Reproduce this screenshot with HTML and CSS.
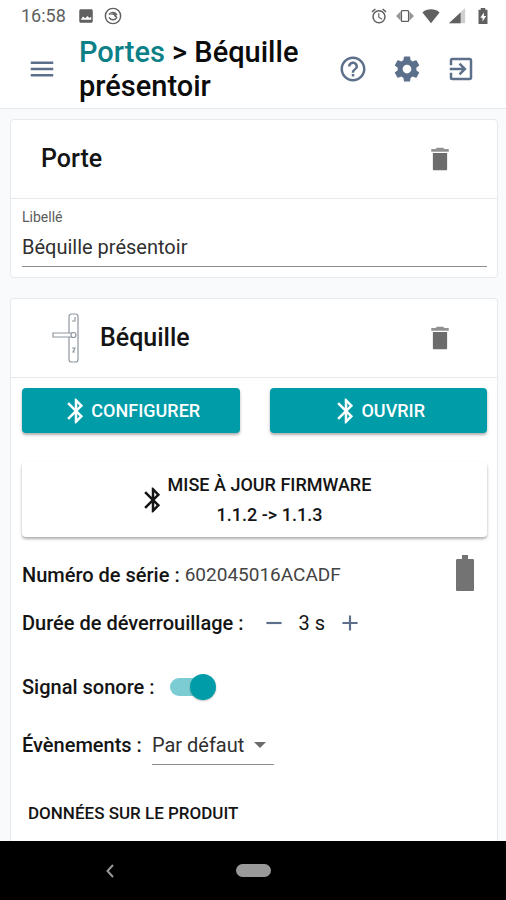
FILE: index.html
```html
<!DOCTYPE html>
<html lang="fr">
<head>
<meta charset="utf-8">
<meta name="viewport" content="width=device-width, initial-scale=1">
<title>Béquille présentoir</title>
<link rel="stylesheet" href="styles.css">
</head>
<body>
<svg class="defs" aria-hidden="true">
  <symbol id="bluetooth" viewBox="0 0 24 24"><path d="M17.71 7.71 12 2h-1v7.59L6.41 5 5 6.41 10.59 12 5 17.59 6.41 19 11 14.41V22h1l5.71-5.71L13.41 12l4.3-4.29zM13 5.83l1.88 1.88L13 9.59V5.83zm1.88 10.46L13 18.17v-3.76l1.88 1.88z"/></symbol>
  <symbol id="trash" viewBox="0 0 24 24"><path d="M6.300 7.200h11.400V20c0 .6-.4 1-1 1H7.300c-.6 0-1-.4-1-1z"/><path opacity=".75" d="M19 4h-3.500l-1-1h-5l-1 1H5v2.200h14V4z"/></symbol>
</svg>

<div class="status">
  <time class="clock">16:58</time>
  <svg class="status-icon" viewBox="0 0 24 24"><path d="M21 19V5c0-1.100-.9-2-2-2H5c-1.100 0-2 .9-2 2v14c0 1.100.9 2 2 2h14c1.100 0 2-.9 2-2zM5 17l3-4.500 3 2.500 3-3 2.500 2.500L19 13v4z"/></svg>
  <svg class="status-icon" viewBox="0 0 20 20"><circle cx="10" cy="10" r="8.500" fill="none" stroke="currentColor" stroke-width="1.600"/><path d="M5.500 8.500C7.500 5 12.500 5 14.500 9M14.500 11.500c-2 3.500-7 3.500-9 0" fill="none" stroke="currentColor" stroke-width="1.500"/><path d="M6 8l6-1.500 3 5.500-3-1-1-2z"/></svg>
  <div class="status-right">
    <svg class="status-icon" viewBox="0 0 24 24"><path d="M22 5.720l-4.600-3.860-1.290 1.530 4.600 3.860L22 5.720zM7.880 3.390 6.600 1.860 2 5.710l1.290 1.530 4.590-3.850zM12.500 8H11v6l4.750 2.850.75-1.230-4-2.370V8zM12 4a9 9 0 1 0 0 18 9 9 0 0 0 0-18zm0 16a7 7 0 1 1 0-14 7 7 0 0 1 0 14z"/></svg>
    <svg class="status-icon" viewBox="0 0 20 20"><path opacity=".65" d="M5 5v10l-5-5zM15 5v10l5-5z"/><rect x="6" y="4" width="8" height="12" rx="1" fill="none" stroke="currentColor" stroke-width="1.500"/></svg>
    <svg class="status-icon" viewBox="0 0 20 20"><path d="M10 18 .5 6C5 1.500 15 1.500 19.500 6z"/></svg>
    <svg class="status-icon" viewBox="0 0 20 20"><path opacity=".3" d="M1 18 19 1v17z"/><path d="M1 18 14 6v12z"/></svg>
    <svg class="status-icon" viewBox="0 0 20 20"><path fill-rule="evenodd" d="M7.500 1h5v2H15v16H5V3h2.500zM11 6l-4 6h2.500v4l4-6H11z"/></svg>
  </div>
</div>

<header class="topbar">
  <button class="icon-button" type="button" aria-label="Menu"><svg class="icon" viewBox="0 0 24 24"><path d="M3 18h18v-2H3v2zm0-5h18v-2H3v2zm0-7v2h18V6H3z"/></svg></button>
  <h1 class="title"><a href="#portes">Portes</a> &gt; Béquille présentoir</h1>
  <nav class="actions">
    <button class="icon-button" type="button" aria-label="Aide"><svg class="icon" viewBox="0 0 24 24"><path d="M11 18h2v-2h-2v2zm1-16C6.480 2 2 6.480 2 12s4.480 10 10 10 10-4.480 10-10S17.520 2 12 2zm0 18c-4.410 0-8-3.590-8-8s3.590-8 8-8 8 3.590 8 8-3.590 8-8 8zm0-14c-2.210 0-4 1.790-4 4h2c0-1.100.9-2 2-2s2 .9 2 2c0 2-3 1.750-3 5h2c0-2.250 3-2.500 3-5 0-2.210-1.790-4-4-4z"/></svg></button>
    <button class="icon-button" type="button" aria-label="Paramètres"><svg class="icon" viewBox="0 0 24 24"><path d="M19.430 12.980c.04-.32.07-.64.07-.98s-.03-.66-.07-.98l2.110-1.650c.19-.15.24-.42.12-.64l-2-3.460c-.12-.22-.39-.3-.61-.22l-2.490 1c-.52-.4-1.080-.73-1.690-.98l-.38-2.650C14.460 2.180 14.250 2 14 2h-4c-.25 0-.46.18-.49.42l-.38 2.650c-.61.25-1.170.59-1.690.98l-2.490-1c-.23-.09-.49 0-.61.22l-2 3.460c-.13.22-.07.49.12.64l2.110 1.650c-.04.32-.07.65-.07.98s.03.66.07.98l-2.110 1.650c-.19.15-.24.42-.12.64l2 3.460c.12.22.39.3.61.22l2.490-1c.52.4 1.080.73 1.690.98l.38 2.650c.03.24.24.42.49.42h4c.25 0 .46-.18.49-.42l.38-2.650c.61-.25 1.170-.59 1.690-.98l2.490 1c.23.09.49 0 .61-.22l2-3.460c.12-.22.07-.49-.12-.64l-2.110-1.650zM12 15.500c-1.930 0-3.500-1.570-3.500-3.500s1.570-3.500 3.500-3.500 3.500 1.570 3.500 3.500-1.570 3.500-3.500 3.500z"/></svg></button>
    <button class="icon-button" type="button" aria-label="Déconnexion"><svg class="icon" viewBox="0 0 24 24"><path d="M10.090 15.590 11.500 17l5-5-5-5-1.410 1.410L12.670 11H3v2h9.670l-2.580 2.590zM19 3H5a2 2 0 0 0-2 2v4h2V5h14v14H5v-4H3v4a2 2 0 0 0 2 2h14c1.100 0 2-.9 2-2V5c0-1.100-.9-2-2-2z"/></svg></button>
  </nav>
</header>

<main class="content">
  <section class="card">
    <div class="card-head">
      <h2>Porte</h2>
      <button class="icon-button delete" type="button" aria-label="Supprimer la porte"><svg class="icon"><use href="#trash"/></svg></button>
    </div>
    <div class="field">
      <label for="libelle">Libellé</label>
      <input id="libelle" type="text" value="Béquille présentoir">
    </div>
  </section>

  <section class="card">
    <div class="card-head">
      <svg class="handle" viewBox="0 0 48 52"><g fill="#fff" stroke="#8d979f" stroke-width="1.200"><rect x="28" y="2" width="9" height="48" rx="2.500"/><path d="M12 21h21v4H12z"/><circle cx="32.500" cy="23" r="2.500"/><path d="M31 9h3V5M31 36h3l-2 4h2"/></g></svg>
      <h2>Béquille</h2>
      <button class="icon-button delete" type="button" aria-label="Supprimer la béquille"><svg class="icon"><use href="#trash"/></svg></button>
    </div>
    <div class="card-body">
      <div class="buttons">
        <button class="button primary" type="button"><svg class="icon"><use href="#bluetooth"/></svg>CONFIGURER</button>
        <button class="button primary" type="button"><svg class="icon"><use href="#bluetooth"/></svg>OUVRIR</button>
      </div>
      <button class="button firmware" type="button"><svg class="icon"><use href="#bluetooth"/></svg><span>MISE À JOUR FIRMWARE<br>1.1.2 -&gt; 1.1.3</span></button>
      <div class="row">
        <span class="label">Numéro de série :</span>
        <span class="serial">602045016ACADF</span>
        <svg class="battery" viewBox="0 0 18 36" role="img" aria-label="Batterie pleine"><path d="M6 0h6v4h4.500c1 0 1.500.5 1.500 1.500v29c0 1-.5 1.500-1.500 1.500h-15C.5 36 0 35.500 0 34.500v-29C0 4.500.5 4 1.500 4H6z"/></svg>
      </div>
      <div class="row duration">
        <span class="label">Durée de déverrouillage :</span>
        <div class="stepper">
          <button type="button" aria-label="Diminuer"><svg viewBox="0 0 24 24"><path d="M5 11h14v2H5z"/></svg></button>
          <output>3 s</output>
          <button type="button" aria-label="Augmenter"><svg viewBox="0 0 24 24"><path d="M19 13h-6v6h-2v-6H5v-2h6V5h2v6h6z"/></svg></button>
        </div>
      </div>
      <div class="row sound">
        <label class="label" for="signal">Signal sonore :</label>
        <input class="switch" id="signal" type="checkbox" role="switch" checked>
      </div>
      <div class="row events">
        <label class="label" for="evenements">Évènements :</label>
        <div class="select">
          <select id="evenements"><option>Par défaut</option></select>
          <svg class="caret" viewBox="0 0 12 6" aria-hidden="true"><path d="M0 0h12L6 6z"/></svg>
        </div>
      </div>
      <button class="text-button" type="button">DONNÉES SUR LE PRODUIT</button>
    </div>
  </section>
</main>

<footer class="navbar">
  <button class="back" type="button" aria-label="Retour"><svg viewBox="0 0 8 14"><path d="M7 1 1.500 7 7 13" fill="none" stroke="currentColor" stroke-width="2"/></svg></button>
  <button class="home" type="button" aria-label="Accueil"></button>
</footer>
</body>
</html>
```

FILE: styles.css
```css
* {
  box-sizing: border-box;
}

body {
  display: flex;
  flex-direction: column;
  height: 100vh;
  margin: 0;
  overflow: hidden;
  background: #f9fafc;
  color: #141414;
  font-family: Roboto, "Liberation Sans", sans-serif;
  font-size: 20px;
  line-height: 24px;
}

button,
input,
select {
  margin: 0;
  padding: 0;
  border: 0;
  background: none;
  color: inherit;
  font: inherit;
}

h1,
h2 {
  margin: 0;
  font-weight: 500;
}

svg {
  display: block;
  flex: none;
  fill: currentColor;
}

.defs {
  position: absolute;
  width: 0;
  height: 0;
}

.icon {
  width: 30px;
  height: 30px;
}

.status {
  display: flex;
  flex: none;
  align-items: center;
  gap: 9px;
  height: 32px;
  padding: 0 14px 0 21px;
  background: #fff;
  color: #606060;
}

.clock {
  margin-right: 2px;
  font-size: 18px;
}

.status-icon {
  width: 18px;
  height: 18px;
}

.status-right {
  display: flex;
  gap: 8px;
  margin-left: auto;
}

.topbar {
  display: flex;
  flex: none;
  align-items: center;
  padding: 3px 18px 5px 15px;
  border-bottom: 1px solid #e6e9ec;
  background: #fff;
}

.icon-button {
  display: flex;
  flex: none;
  align-items: center;
  justify-content: center;
  width: 54px;
  height: 54px;
  color: #5c708b;
}

.title {
  flex: 1;
  padding-left: 10px;
  color: #0c0c0c;
  font-size: 29px;
  line-height: 34px;
}

.title a {
  color: #0b8087;
  text-decoration: none;
}

.actions {
  display: flex;
}

.content {
  display: flex;
  flex: 1;
  flex-direction: column;
  gap: 20px;
  min-height: 0;
  padding: 10px 8px 0 10px;
  overflow: hidden;
}

.card {
  flex: none;
  border: 1px solid #e7eaed;
  border-radius: 4px;
  background: #fff;
}

.card:last-child {
  flex: 1 0 auto;
  border-bottom: 0;
  border-radius: 4px 4px 0 0;
}

.card-head {
  display: flex;
  align-items: center;
  height: 79px;
  padding: 0 30px;
  border-bottom: 1px solid #e7eaed;
}

.card-head h2 {
  font-size: 25px;
  line-height: 32px;
}

.delete {
  margin-left: auto;
  color: #6c6c6c;
}

.handle {
  width: 48px;
  height: 52px;
  margin-right: 11px;
}

.field {
  display: flex;
  flex-direction: column;
  padding: 8px 10px 10px 11px;
}

.field label {
  color: #5c5c5c;
  font-size: 14px;
  line-height: 20px;
}

.field input {
  height: 40px;
  border-bottom: 1px solid #8c8c8c;
  color: #303030;
}

.card-body {
  padding: 10px 10px 10px 11px;
}

.buttons {
  display: flex;
  gap: 30px;
}

.button {
  display: flex;
  flex: 1;
  align-items: center;
  justify-content: center;
  border-radius: 4px;
  font-size: 18px;
  font-weight: 500;
  box-shadow: 0 2px 3px rgba(0, 0, 0, .32);
}

.primary {
  height: 45px;
  background: #009da9;
  color: #fff;
}

.firmware {
  width: 100%;
  height: 75px;
  margin: 29px 0 16px;
  line-height: 30px;
}

.row {
  display: flex;
  align-items: center;
  min-height: 44px;
}

.label {
  font-weight: 500;
}

.serial {
  margin-left: 5px;
  color: #444;
  font-size: 19px;
}

.battery {
  align-self: flex-start;
  width: 18px;
  height: 36px;
  margin: 2px 13px 0 auto;
  color: #737373;
}

.duration {
  margin-top: 4px;
}

.stepper {
  display: flex;
  align-items: center;
  gap: 12px;
  margin-left: 17px;
}

.stepper button {
  color: #5c708b;
}

.stepper svg {
  width: 26px;
  height: 26px;
}

.sound {
  margin-top: 20px;
}

.switch {
  position: relative;
  width: 46px;
  height: 26px;
  margin-left: 15px;
  appearance: none;
}

.switch::before {
  position: absolute;
  inset: 4px 6px 4px 0;
  border-radius: 9px;
  background: #7ccdd3;
  content: "";
}

.switch::after {
  position: absolute;
  top: 0;
  right: 0;
  width: 26px;
  height: 26px;
  border-radius: 50%;
  background: #009da9;
  box-shadow: 0 1px 2px rgba(0, 0, 0, .25);
  content: "";
}

.events {
  margin-top: 14px;
}

.select {
  display: grid;
  align-items: center;
  width: 122px;
  margin-left: 10px;
}

.select select {
  grid-area: 1 / 1;
  width: 100%;
  height: 40px;
  border-bottom: 1px solid #8c8c8c;
  color: #303030;
  appearance: none;
}

.caret {
  grid-area: 1 / 1;
  justify-self: end;
  width: 12px;
  height: 6px;
  margin-right: 8px;
  color: #6c6c6c;
  pointer-events: none;
}

.text-button {
  height: 44px;
  margin-top: 24px;
  padding: 0 6px;
  font-size: 17px;
  font-weight: 500;
}

.navbar {
  display: grid;
  flex: none;
  grid-template-columns: 1fr auto 1fr;
  align-items: center;
  height: 59px;
  background: #000;
  color: #999;
}

.back {
  justify-self: center;
  margin-right: 16px;
}

.back svg {
  width: 8px;
  height: 14px;
}

.home {
  width: 35px;
  height: 13px;
  border-radius: 7px;
  background: #999;
}
```
